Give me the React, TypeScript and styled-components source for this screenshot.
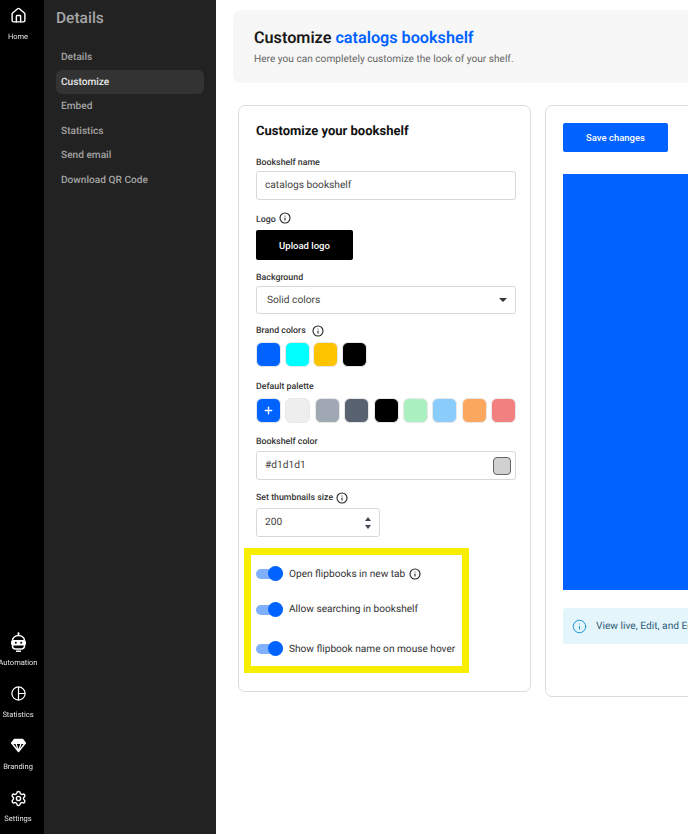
import { createGlobalStyle, styled } from 'styled-components';
import { House, Info, Plus, Settings } from 'lucide-react';

const GlobalStyle = createGlobalStyle`
  html, body {
    margin: 0;
    padding: 0;
    background: #fff;
    font-family: Roboto, "Liberation Sans", sans-serif;
    text-rendering: geometricPrecision;
  }
  * {
    box-sizing: border-box;
  }
`;

const Page = styled.div`
  display: flex;
  width: 688px;
  height: 834px;
  overflow: hidden;
`;

const Rail = styled.nav`
  width: 44px;
  flex-shrink: 0;
  background: #000;
  display: flex;
  flex-direction: column;
  justify-content: space-between;
  padding: 7px 8px 10px 0;
`;

const RailGroup = styled.div`
  display: flex;
  flex-direction: column;
  gap: 18px;
`;

const RailItem = styled.a<{ $height?: number }>`
  height: ${props => props.$height ?? 34}px;
  display: flex;
  flex-direction: column;
  align-items: center;
  justify-content: space-between;
  color: #e2e2e2;
  font-size: 7.5px;
  line-height: 10px;
  white-space: nowrap;
  will-change: opacity;
  svg {
    color: #fff;
  }
`;

const Panel = styled.aside`
  width: 172px;
  flex-shrink: 0;
  background: #222;
  padding: 9px 12px 0;
`;

const PanelTitle = styled.h2`
  margin: 0 0 18px;
  color: #a6a6a6;
  font-size: 15.5px;
  line-height: 18px;
  font-weight: 500;
`;

const PanelItem = styled.a<{ $active?: boolean }>`
  display: flex;
  align-items: center;
  height: 24.5px;
  padding: 1px 0 0 5px;
  border-radius: 6px;
  font-size: 10.15px;
  font-weight: 500;
  color: ${props => (props.$active ? '#e6e6e6' : '#a3a3a3')};
  background: ${props => (props.$active ? '#333' : 'transparent')};
`;

const Main = styled.main`
  flex: 1;
  min-width: 0;
  padding: 10px 0 0 17px;
`;

const Header = styled.header`
  width: 520px;
  height: 73px;
  background: #f7f7f7;
  border-radius: 8px;
  padding: 18px 21px;
`;

const Title = styled.h1`
  margin: 0 0 5px;
  font-size: 16.2px;
  line-height: 20px;
  font-weight: 600;
  color: #1a1a1a;
  span {
    color: #0062ff;
  }
`;

const Subtitle = styled.p`
  margin: 0;
  font-size: 10.15px;
  line-height: 14px;
  color: #666;
`;

const Columns = styled.div`
  display: flex;
  align-items: flex-start;
  gap: 14px;
  margin: 22px 0 0 5px;
`;

const Card = styled.section`
  flex-shrink: 0;
  border: 1px solid #dcdcdc;
  border-radius: 7px;
  background: #fff;
`;

const FormCard = styled(Card)`
  width: 293px;
  height: 587px;
  padding: 18px 14px 0 17px;
`;

const PreviewCard = styled(Card)`
  width: 500px;
  height: 592px;
  padding: 17px;
`;

const CardTitle = styled.h3`
  margin: 0 0 15px;
  font-size: 13px;
  line-height: 16px;
  font-weight: 700;
  color: #111;
`;

const Label = styled.label<{ $before?: number; $after?: number; $iconGap?: number }>`
  display: flex;
  align-items: center;
  gap: ${props => props.$iconGap ?? 3}px;
  height: 14px;
  padding-top: 2px;
  font-size: 8.8px;
  font-weight: 500;
  color: #333;
  margin-top: ${props => props.$before ?? 0}px;
  margin-bottom: ${props => props.$after ?? 2}px;
`;

const FieldBox = styled.div<{ $width?: number; $height?: number; $inset?: number }>`
  display: flex;
  align-items: center;
  justify-content: space-between;
  width: ${props => props.$width ?? 260}px;
  height: ${props => props.$height ?? 29}px;
  padding: 0.5px 8px 0 ${props => props.$inset ?? 8}px;
  border: 1px solid #d8d8d8;
  border-radius: 3px;
  font-size: 10.2px;
  color: #444;
`;

const BlackButton = styled.button`
  display: block;
  width: 97px;
  height: 30px;
  border: 0;
  border-radius: 2px;
  background: #000;
  color: #fff;
  font: 500 9.5px Roboto, sans-serif;
`;

const Caret = styled.span`
  width: 0;
  height: 0;
  border-left: 4px solid transparent;
  border-right: 4px solid transparent;
  border-top: 4px solid #333;
`;

const Stepper = styled.span`
  display: flex;
  flex-direction: column;
  gap: 4px;
  &::before,
  &::after {
    content: '';
    width: 0;
    height: 0;
    border-left: 3px solid transparent;
    border-right: 3px solid transparent;
  }
  &::before {
    border-bottom: 4px solid #445;
  }
  &::after {
    border-top: 4px solid #445;
  }
`;

const SwatchRow = styled.div<{ $gap: number }>`
  display: flex;
  gap: ${props => props.$gap}px;
`;

const Swatch = styled.div<{ $color: string }>`
  display: flex;
  align-items: center;
  justify-content: center;
  width: 25px;
  height: 25px;
  border-radius: 6px;
  border: 1px solid #e8e8e8;
  color: #fff;
  background: ${props => props.$color};
`;

const ColorChip = styled.span`
  width: 18px;
  height: 18px;
  margin-right: -4px;
  border-radius: 4px;
  border: 1px solid #666;
  background: #d1d1d1;
`;

const Highlight = styled.div`
  width: 225px;
  height: 125px;
  margin: 11px 0 0 -12px;
  padding: 8px 0 0 5px;
  border: 7px solid #f7ee00;
`;

const ToggleRow = styled.div<{ $height: number }>`
  display: flex;
  align-items: center;
  gap: 6px;
  height: ${props => props.$height}px;
  font-size: 10.13px;
  color: #333;
  white-space: nowrap;
`;

const Toggle = styled.span`
  position: relative;
  width: 27px;
  height: 10px;
  border-radius: 5px;
  background: #80b0fc;
  &::after {
    content: '';
    position: absolute;
    right: 0;
    top: -3px;
    width: 15px;
    height: 15px;
    border-radius: 50%;
    background: #0062ff;
  }
`;

const RowInfo = styled.span`
  display: flex;
  margin-left: -2px;
`;

const SaveButton = styled.button`
  display: block;
  width: 105px;
  height: 29px;
  padding: 0 0 1px;
  border: 0;
  border-radius: 2px;
  background: #0062ff;
  color: #fff;
  font: 500 9.5px Roboto, sans-serif;
`;

const PreviewArea = styled.div`
  height: 416px;
  margin-top: 22px;
  background: #0062ff;
`;

const Notice = styled.div`
  display: flex;
  align-items: center;
  gap: 9px;
  height: 36px;
  margin-top: 18px;
  padding-left: 9px;
  border-radius: 3px;
  background: #e5f5fc;
  color: #2f5d78;
  font-size: 10.2px;
  white-space: nowrap;
  svg {
    color: #1f96d8;
  }
`;

const RaisedInfo = styled.span`
  display: flex;
  margin-top: -4px;
`;

const InfoIcon = () => <Info size={12} color="#222" strokeWidth={2.2} />;

const AutomationIcon = () => (
  <svg width="19" height="20" viewBox="0 0 19 20" fill="none" stroke="#fff" strokeWidth="1.5">
    <path d="M9.5 0.5v3" />
    <circle cx="9.5" cy="1.4" r="0.9" fill="#fff" stroke="none" />
    <path d="M3.5 8.5a6 5 0 0 1 12 0M3.5 13v1a3 3 0 0 0 3 3h6a3 3 0 0 0 3-3v-1" />
    <rect x="2" y="8" width="15" height="5.5" rx="2.2" fill="#fff" stroke="none" />
    <circle cx="6.8" cy="10.7" r="1" fill="#000" stroke="none" />
    <circle cx="12.2" cy="10.7" r="1" fill="#000" stroke="none" />
    <path d="M7 19.2h5" />
  </svg>
);

const StatisticsIcon = () => (
  <svg width="15" height="15" viewBox="0 0 15 15" fill="none" stroke="#fff" strokeWidth="1.2">
    <circle cx="7.5" cy="7.5" r="6.6" />
    <path d="M7.5 1v13M7.5 7.5h6.5" />
  </svg>
);

const BrandingIcon = () => (
  <svg width="15" height="15" viewBox="0 0 15 15" fill="none" stroke="#fff" strokeWidth="1.5" strokeLinejoin="round">
    <path d="M3.5 1.5h8l2.8 3.5-6.8 8.5L0.7 5z" />
    <path d="M0.7 5.5h13.6M5 5.5l2.5 7.5 2.5-7.5" strokeWidth="1.2" />
    <path d="M3.5 1.5h8l2.8 3.5H0.7z" fill="#fff" stroke="none" />
  </svg>
);

const brandColors = ['#0062ff', '#00ffff', '#ffc400', '#000'];
const paletteColors = ['#eee', '#a0a8b4', '#596270', '#000', '#abf0c0', '#8accfc', '#fba85e', '#f28080'];
const panelItems = ['Details', 'Customize', 'Embed', 'Statistics', 'Send email', 'Download QR Code'];

export default function App() {
  return (
    <Page>
      <GlobalStyle />
      <Rail>
        <RailItem $height={35}>
          <House size={17} strokeWidth={2} />
          Home
        </RailItem>
        <RailGroup>
          <RailItem $height={36}>
            <AutomationIcon />
            Automation
          </RailItem>
          <RailItem>
            <StatisticsIcon />
            Statistics
          </RailItem>
          <RailItem>
            <BrandingIcon />
            Branding
          </RailItem>
          <RailItem>
            <Settings size={17} strokeWidth={2} />
            Settings
          </RailItem>
        </RailGroup>
      </Rail>
      <Panel>
        <PanelTitle>Details</PanelTitle>
        {panelItems.map(item => (
          <PanelItem key={item} $active={item === 'Customize'}>{item}</PanelItem>
        ))}
      </Panel>
      <Main>
        <Header>
          <Title>Customize <span>catalogs bookshelf</span></Title>
          <Subtitle>Here you can completely customize the look of your shelf.</Subtitle>
        </Header>
        <Columns>
          <FormCard>
            <CardTitle>Customize your bookshelf</CardTitle>
            <Label>Bookshelf name</Label>
            <FieldBox>catalogs bookshelf</FieldBox>
            <Label $before={12} $after={4}>Logo <RaisedInfo><InfoIcon /></RaisedInfo></Label>
            <BlackButton>Upload logo</BlackButton>
            <Label $before={10}>Background</Label>
            <FieldBox $height={28} $inset={10}>Solid colors <Caret /></FieldBox>
            <Label $before={9} $after={5} $iconGap={6}>Brand colors <InfoIcon /></Label>
            <SwatchRow $gap={3.5}>
              {brandColors.map(color => <Swatch key={color} $color={color} />)}
            </SwatchRow>
            <Label $before={12} $after={5}>Default palette</Label>
            <SwatchRow $gap={4.375}>
              <Swatch $color="#0062ff"><Plus size={11} strokeWidth={3} /></Swatch>
              {paletteColors.map(color => <Swatch key={color} $color={color} />)}
            </SwatchRow>
            <Label $before={11} $after={3}>Bookshelf color</Label>
            <FieldBox>#d1d1d1 <ColorChip /></FieldBox>
            <Label $before={10} $after={4}>Set thumbnails size <InfoIcon /></Label>
            <FieldBox $width={124}>200 <Stepper /></FieldBox>
            <Highlight>
              <ToggleRow $height={22}><Toggle />Open flipbooks in new tab <RowInfo><InfoIcon /></RowInfo></ToggleRow>
              <ToggleRow $height={49}><Toggle />Allow searching in bookshelf</ToggleRow>
              <ToggleRow $height={30}><Toggle />Show flipbook name on mouse hover</ToggleRow>
            </Highlight>
          </FormCard>
          <PreviewCard>
            <SaveButton>Save changes</SaveButton>
            <PreviewArea />
            <Notice><Info size={15} strokeWidth={1.6} />View live, Edit, and Edit your bookshelf</Notice>
          </PreviewCard>
        </Columns>
      </Main>
    </Page>
  );
}
